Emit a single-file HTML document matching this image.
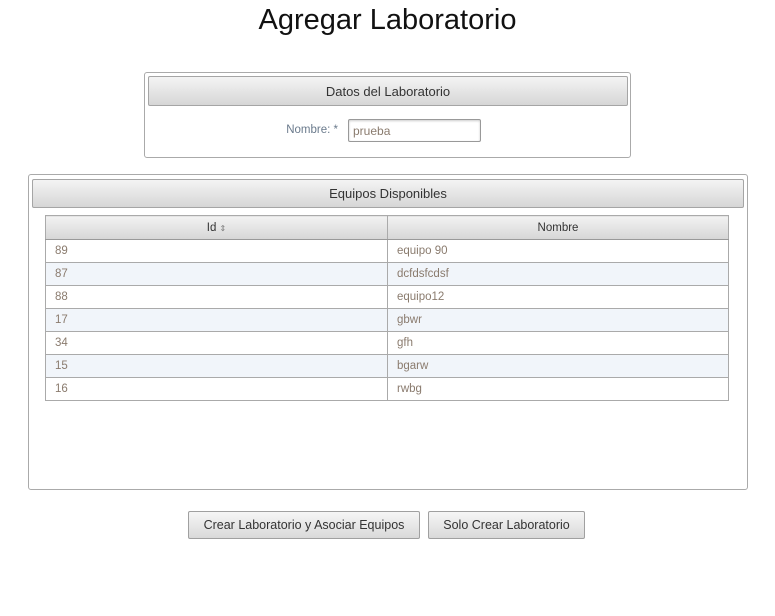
<!DOCTYPE html><html><head><style>
body{margin:0;width:775px;height:616px;background:#fff;font-family:"Liberation Sans",sans-serif;position:relative;overflow:hidden}
.a{position:absolute;box-sizing:border-box}
.box{border:1px solid #aaa;border-radius:3px}
.hd{border:1px solid #a5a5a5;border-radius:2px;background:linear-gradient(#f4f4f4,#d6d6d6);color:#333;font-size:13px;text-align:center}
td{font-size:11.5px;color:#8a7b6e;height:22px;padding:0 0 0 9px;border-bottom:1px solid #aaa;border-right:1px solid #aaa}
th{font-size:11.5px;color:#333;font-weight:normal;height:23px;padding:0;background:linear-gradient(#f2f2f2,#d6d6d6);border-right:1px solid #aaa;border-bottom:1px solid #999}
tr:nth-child(odd) td{background:#f1f5fa}
table{border-collapse:collapse;border-left:1px solid #aaa;border-top:1px solid #aaa;table-layout:fixed}
.btn{border:1px solid #a0a0a0;border-radius:2px;background:linear-gradient(#f6f6f6,#d9d9d9);font-size:12.5px;color:#333;text-align:center;line-height:26px}
</style></head><body>
<div class="a" style="left:0;width:775px;top:4px;text-align:center;font-size:29px;color:#111">Agregar Laboratorio</div>
<div class="a box" style="left:144px;top:72px;width:487px;height:86px"></div>
<div class="a hd" style="left:148px;top:76px;width:480px;height:30px;line-height:29px">Datos del Laboratorio</div>
<div class="a" style="left:240px;width:98px;top:124px;text-align:right;font-size:11.5px;color:#6a7a8c">Nombre: *</div>
<div class="a" style="left:348px;top:119px;width:133px;height:23px;border:1px solid #999;border-radius:2px;font-size:12px;color:#8a7b6e;padding:4px 0 0 4px;box-shadow:inset 0 1px 2px #ccc">prueba</div>
<div class="a box" style="left:28px;top:174px;width:720px;height:316px"></div>
<div class="a hd" style="left:32px;top:179px;width:712px;height:29px;line-height:28px">Equipos Disponibles</div>
<table class="a" style="left:45px;top:215px;width:684px">
<tr><th style="width:341px">Id <span style="font-size:8px;color:#777">&#8661;</span></th><th>Nombre</th></tr>
<tr><td>89</td><td>equipo 90</td></tr>
<tr><td>87</td><td>dcfdsfcdsf</td></tr>
<tr><td>88</td><td>equipo12</td></tr>
<tr><td>17</td><td>gbwr</td></tr>
<tr><td>34</td><td>gfh</td></tr>
<tr><td>15</td><td>bgarw</td></tr>
<tr><td>16</td><td>rwbg</td></tr>
</table>
<div class="a btn" style="left:188px;top:511px;width:232px;height:28px">Crear Laboratorio y Asociar Equipos</div>
<div class="a btn" style="left:428px;top:511px;width:157px;height:28px">Solo Crear Laboratorio</div>
</body></html>
